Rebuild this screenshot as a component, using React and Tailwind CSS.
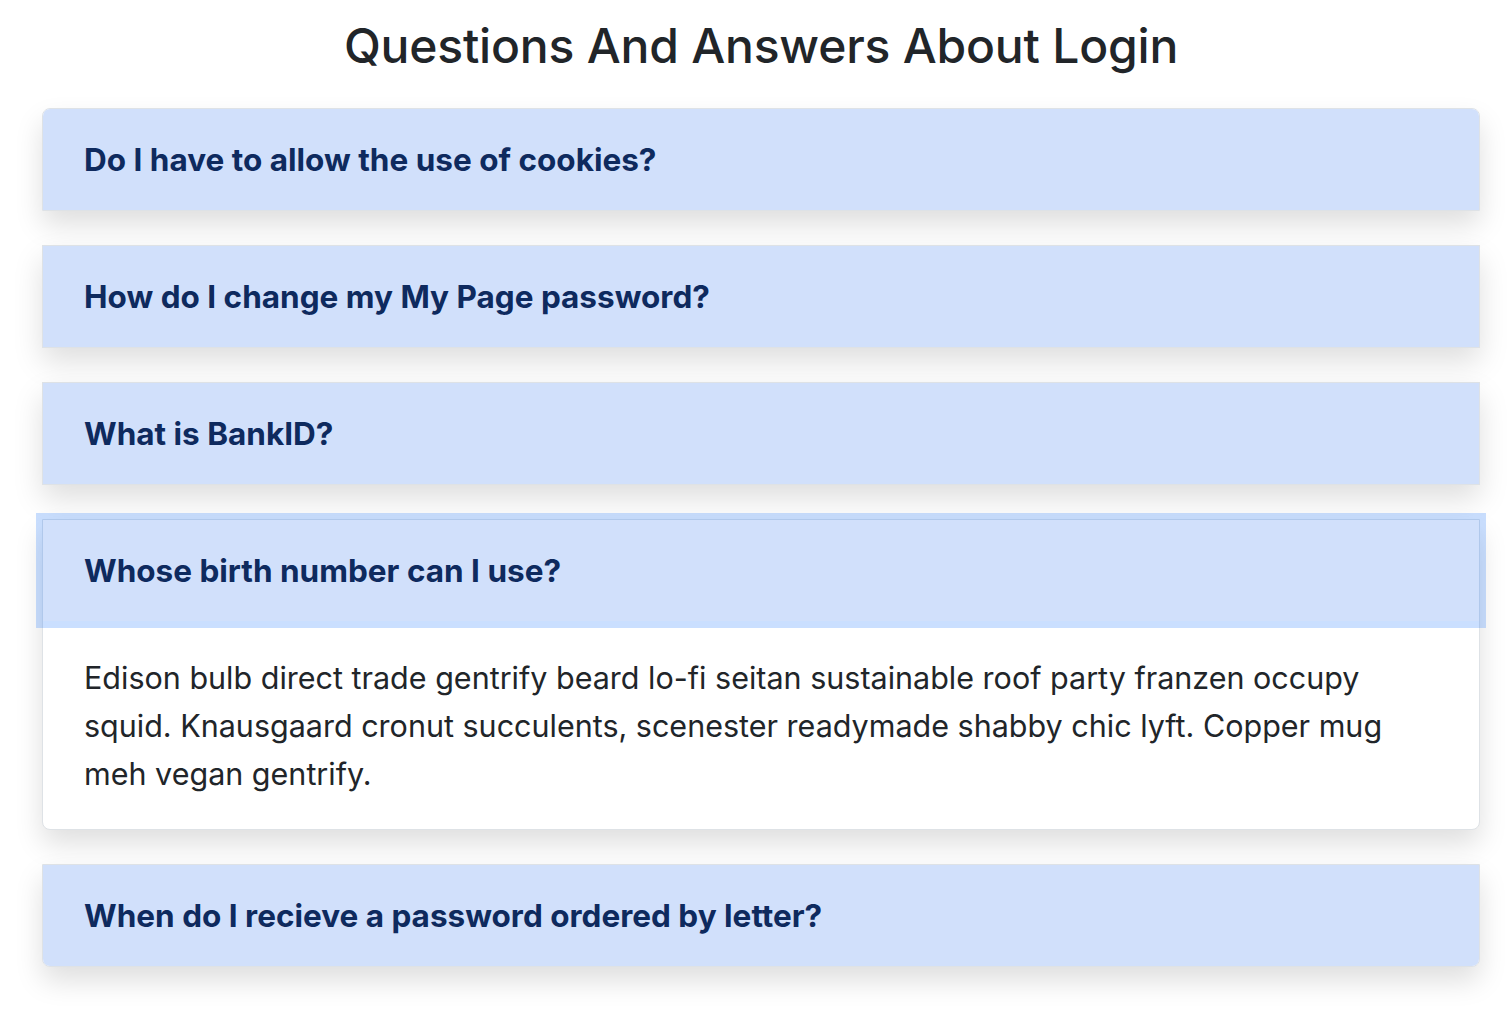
import { useState } from 'react'

const faqs = [
  { q: 'Do I have to allow the use of cookies?', a: 'Edison bulb direct trade gentrify beard lo-fi seitan sustainable roof party franzen occupy squid. Knausgaard cronut succulents, scenester readymade shabby chic lyft. Copper mug meh vegan gentrify.' },
  { q: 'How do I change my My Page password?', a: 'Edison bulb direct trade gentrify beard lo-fi seitan sustainable roof party franzen occupy squid. Knausgaard cronut succulents, scenester readymade shabby chic lyft. Copper mug meh vegan gentrify.' },
  { q: 'What is BankID?', a: 'Edison bulb direct trade gentrify beard lo-fi seitan sustainable roof party franzen occupy squid. Knausgaard cronut succulents, scenester readymade shabby chic lyft. Copper mug meh vegan gentrify.' },
  { q: 'Whose birth number can I use?', a: 'Edison bulb direct trade gentrify beard lo-fi seitan sustainable roof party franzen occupy squid. Knausgaard cronut succulents, scenester readymade shabby chic lyft. Copper mug meh vegan gentrify.' },
  { q: 'When do I recieve a password ordered by letter?', a: 'Edison bulb direct trade gentrify beard lo-fi seitan sustainable roof party franzen occupy squid. Knausgaard cronut succulents, scenester readymade shabby chic lyft. Copper mug meh vegan gentrify.' },
]

export default function App() {
  const [open, setOpen] = useState(3)
  const last = faqs.length - 1

  return (
    <div className="min-h-screen bg-white font-['Inter','Liberation_Sans',sans-serif] text-[#212529]">
      <div className="ml-[42px] w-[1438px] pt-[18px]">
        <h2 className="text-center text-[48px] leading-[56px] font-medium tracking-[-0.2px]">
          Questions And Answers About Login
        </h2>

        {/* Accordion */}
        <div className="mt-[34px] flex flex-col gap-[34px]">
          {faqs.map((item, i) => {
            const isOpen = open === i
            return (
              <div
                key={item.q}
                className={`bg-white border border-[#dee2e6] shadow-[0_14px_28px_rgba(0,0,0,0.13)] ${
                  i === 0 ? 'rounded-t-[8px]' : ''
                } ${isOpen || i === last ? 'rounded-b-[8px]' : ''}`}
              >
                <button
                  onClick={() => setOpen(isOpen ? null : i)}
                  className={`relative z-10 flex w-full items-center h-[101px] px-[41px] bg-[#d1e0fb] text-left text-[31.5px] font-bold text-[#0e2a5e] ${
                    i === 0 ? 'rounded-t-[7px]' : ''
                  } ${isOpen ? 'shadow-[0_0_0_7px_rgba(13,110,253,0.22)]' : ''} ${
                    !isOpen && i === last ? 'rounded-b-[7px]' : ''
                  }`}
                >
                  {item.q}
                </button>
                {isOpen && (
                  <div className="px-[41px] pt-[33px] pb-[31px] text-[30.5px] leading-[48px]">
                    {item.a}
                  </div>
                )}
              </div>
            )
          })}
        </div>
      </div>
    </div>
  )
}
